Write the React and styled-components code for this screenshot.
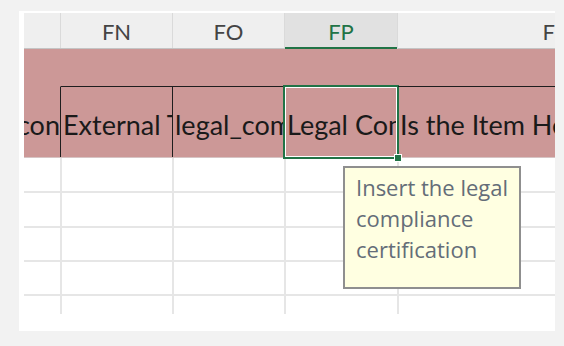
import React from 'react'
import styled, { createGlobalStyle } from 'styled-components'

const GlobalStyle = createGlobalStyle`
    html, body {
        margin: 0;
        padding: 0;
        background: #f2f2f2;
    }
    body {
        padding: 11px 9px 0 19px;
    }
`

const columns = '37px 112px 112px 113px 320px'

const headers = ['', 'FN', 'FO', 'FP', 'FQ']
const labels = ['Legal con', 'External Tax Code', 'legal_compliance', 'Legal Compliance', 'Is the Item Heavy?']
const bodyRows = [35, 35, 34, 34, 18]

export default function App() {
    return (
        <>
            <GlobalStyle />
            <Panel>
                <Sheet>
                    <HeaderRow>
                        {headers.map((h, i) => (
                            <HeaderCell key={i} active={i === 3}>{h}</HeaderCell>
                        ))}
                    </HeaderRow>
                    <BannerRow />
                    <LabelRow>
                        {labels.map((l, i) => (
                            <LabelCell key={i} first={i === 0}>
                                <LabelText first={i === 0}>{l}</LabelText>
                                {i === 3 && (
                                    <Selection>
                                        <Handle />
                                    </Selection>
                                )}
                            </LabelCell>
                        ))}
                    </LabelRow>
                    {bodyRows.map((h, r) => (
                        <BodyRow key={r} height={h} last={r === bodyRows.length - 1}>
                            {headers.map((_, i) => (
                                <BodyCell key={i} />
                            ))}
                        </BodyRow>
                    ))}
                    <Tooltip>
                        Insert the legal compliance certification
                    </Tooltip>
                </Sheet>
            </Panel>
        </>
    )
}

const Panel = styled.div`
    width: 536px;
    height: 320px;
    background: #ffffff;
    overflow: hidden;
    padding: 2px 0 0 5px;
    box-sizing: border-box;
`

const Sheet = styled.div`
    position: relative;
    width: 694px;
    font-family: Lato, "Open Sans", sans-serif;
`

const RowBase = styled.div`
    display: grid;
    grid-template-columns: ${columns};
`

const HeaderRow = styled(RowBase)`
    height: 35px;
    background: #efefef;
    border-bottom: 1px solid #c4c4c4;
`

const HeaderCell = styled.div`
    display: flex;
    align-items: center;
    justify-content: center;
    font-size: 22px;
    color: ${p => (p.active ? '#217346' : '#444444')};
    background: ${p => (p.active ? '#e1e1e1' : 'transparent')};
    border-right: 1px solid #dadada;
    box-shadow: ${p => (p.active ? 'inset 0 -2px 0 #217346' : 'none')};
    margin-bottom: ${p => (p.active ? '-1px' : '0')};
    padding-top: 1px;
`

const BannerRow = styled.div`
    height: 37px;
    background: #cc9897;
`

const LabelRow = styled(RowBase)`
    height: 71px;
    background: #cc9897;
    border-bottom: 1px solid #d6c4c4;
`

const LabelCell = styled.div`
    position: relative;
    display: flex;
    align-items: center;
    justify-content: ${p => (p.first ? 'flex-end' : 'flex-start')};
    overflow: ${p => (p.first ? 'hidden' : 'visible')};
    border-top: ${p => (p.first ? '1px solid transparent' : '1px solid #1e1e1e')};
    border-right: 1px solid #1e1e1e;
    min-width: 0;
`

const LabelText = styled.span`
    display: block;
    white-space: nowrap;
    overflow: hidden;
    font-size: 27px;
    color: #1a1a1a;
    padding: 5px 0 0 ${p => (p.first ? '0' : '2px')};
    flex-shrink: ${p => (p.first ? '0' : '1')};
`

const Selection = styled.div`
    position: absolute;
    left: -2px;
    top: -2px;
    right: -2px;
    bottom: -2px;
    border: 2px solid #217346;
    box-shadow: inset 0 0 0 1px #ffffff;
    pointer-events: none;
`

const Handle = styled.div`
    position: absolute;
    right: -5px;
    bottom: -5px;
    width: 6px;
    height: 6px;
    background: #217346;
    border: 1px solid #ffffff;
`

const BodyRow = styled(RowBase)`
    height: ${p => p.height}px;
    box-sizing: border-box;
    border-bottom: ${p => (p.last ? 'none' : '2px solid #e6e6e6')};
`

const BodyCell = styled.div`
    border-right: 2px solid #e6e6e6;
    margin-right: -1px;
`

const Tooltip = styled.div`
    position: absolute;
    left: 319px;
    top: 153px;
    width: 178px;
    height: 123px;
    box-sizing: border-box;
    padding: 4px 10px 0 11px;
    background: #ffffe1;
    border: 2px solid #8f8f8f;
    font-family: "Open Sans", sans-serif;
    font-size: 22px;
    line-height: 31px;
    color: #646d78;
`
